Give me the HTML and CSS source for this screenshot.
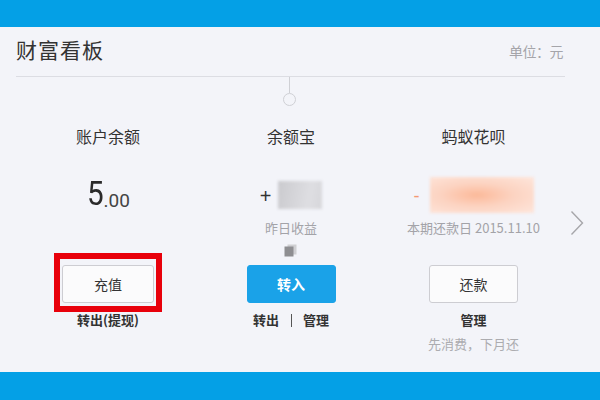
FILE: index.html
```html
<!DOCTYPE html>
<html lang="zh-CN">
<head>
<meta charset="utf-8">
<title>财富看板</title>
<link rel="stylesheet" href="styles.css">
</head>
<body>
<div class="page">
  <div class="bar"></div>
  <main class="board">
    <header class="board-head">
      <h1 class="board-title">财富看板</h1>
      <span class="unit">单位：元</span>
    </header>
    <div class="connector"><span class="stem"></span><span class="knob"></span></div>
    <section class="cols">
      <div class="col">
        <div class="col-title">账户余额</div>
        <div class="value"><span class="int">5</span><span class="dec">.00</span></div>
        <div class="meta"></div>
        <div class="btn-wrap">
          <button class="btn btn-plain">充值</button>
          <span class="mark"></span>
        </div>
        <div class="links">转出(提现)</div>
      </div>
      <div class="col">
        <div class="col-title">余额宝</div>
        <div class="value"><span class="sign">+</span><span class="blur blur-gray"></span></div>
        <div class="meta">
          <div class="sub">昨日收益</div>
          <svg class="doc" width="13" height="13" viewBox="0 0 13 13"><rect x="3.5" y="0.5" width="9" height="10" fill="#cfcfd2"/><rect x="0.5" y="2.5" width="9" height="10" fill="#8e8e91"/></svg>
        </div>
        <div class="btn-wrap">
          <button class="btn btn-blue">转入</button>
        </div>
        <div class="links"><span>转出</span><span class="pipe"></span><span>管理</span></div>
      </div>
      <div class="col">
        <div class="col-title">蚂蚁花呗</div>
        <div class="value"><span class="sign sign-minus">-</span><span class="blur blur-peach"></span></div>
        <div class="meta">
          <div class="sub">本期还款日 2015.11.10</div>
        </div>
        <div class="btn-wrap">
          <button class="btn btn-plain btn-narrow">还款</button>
        </div>
        <div class="links">管理</div>
        <div class="hint">先消费，下月还</div>
      </div>
      <svg class="next" width="14" height="26" viewBox="0 0 14 26"><polyline points="1.5,1.5 12.5,13 1.5,24.5" fill="none" stroke="#a6a6aa" stroke-width="1.4"/></svg>
    </section>
  </main>
  <div class="bar bar-bottom"></div>
</div>
</body>
</html>
```

FILE: styles.css
```css
* { box-sizing: border-box; }
html, body { margin: 0; padding: 0; }
body {
  font-family: "Noto Sans CJK SC", "Noto Sans", sans-serif;
  background: #f3f4f9;
  color: #333;
}
.page {
  height: 400px;
  display: flex;
  flex-direction: column;
}
.bar {
  height: 27px;
  background: #04a0e6;
  flex: none;
}
.bar-bottom { height: 28px; }
.board {
  flex: 1;
  padding: 0 35px 0 16px;
}
.board-head {
  height: 50px;
  display: flex;
  align-items: flex-start;
  justify-content: space-between;
  padding-top: 8px;
  border-bottom: 1px solid #dcdde3;
}
.board-title {
  margin: 0;
  font-size: 21px;
  font-weight: 400;
  color: #333;
  letter-spacing: 1px;
  line-height: 28px;
}
.unit {
  font-size: 14px;
  line-height: 20px;
  color: #a5a5aa;
  margin-top: 6px;
  margin-right: 2px;
  letter-spacing: -0.5px;
}
.connector {
  height: 30px;
  display: flex;
  flex-direction: column;
  align-items: center;
  margin-left: -2px;
}
.stem {
  width: 1px;
  height: 16px;
  background: #cfd0d5;
}
.knob {
  width: 13px;
  height: 13px;
  border: 1.5px solid #cfd0d5;
  border-radius: 50%;
}
.cols {
  position: relative;
  display: grid;
  grid-template-columns: 184px 182px 183px;
}
.col {
  display: flex;
  flex-direction: column;
  align-items: center;
}
.col-title {
  margin-top: 19px;
  height: 20px;
  line-height: 20px;
  font-size: 16px;
  color: #333;
}
.value {
  margin-top: 31px;
  height: 36px;
  display: flex;
  align-items: center;
  justify-content: center;
}
.int {
  font-family: "Roboto", "Liberation Sans", sans-serif;
  font-size: 33px;
  line-height: 36px;
  color: #2a2a2a;
  transform: scaleX(0.9);
  margin-top: -2px;
}
.dec {
  font-family: "Roboto", "Liberation Sans", sans-serif;
  font-size: 19px;
  color: #444;
  margin-top: 11px;
  margin-left: -1px;
}
.sign {
  font-family: "Liberation Sans", sans-serif;
  font-size: 20px;
  color: #333;
  margin-right: 7px;
  margin-top: 2px;
}
.sign-minus {
  color: #f39a72;
  margin-right: 10px;
  font-size: 18px;
}
.blur {
  display: block;
  filter: blur(1.5px);
}
.blur-gray {
  width: 44px;
  height: 28px;
  background: linear-gradient(100deg, #cacace, #dedee2 70%, #d6d6da);
}
.blur-peach {
  width: 104px;
  height: 36px;
  background: radial-gradient(ellipse at 45% 50%, #fbb999 0%, #fcd3c1 45%, #fde6dc 100%);
}
.meta {
  height: 52px;
  display: flex;
  flex-direction: column;
  align-items: center;
}
.sub {
  margin-top: 7px;
  font-size: 13px;
  line-height: 16px;
  color: #a3a3a8;
}
.doc {
  margin-top: 8px;
}
.btn-wrap {
  position: relative;
  height: 38px;
}
.btn {
  font-family: "Noto Sans CJK SC", sans-serif;
  height: 38px;
  width: 89px;
  font-size: 14px;
  border-radius: 3px;
  padding: 0;
}
.btn-plain {
  width: 92px;
  background: #fbfbfc;
  border: 1px solid #cdcdd2;
  color: #333;
}
.btn-narrow { width: 89px; }
.btn-blue {
  background: #1aa2e8;
  border: 1px solid #1aa2e8;
  color: #fff;
  font-weight: 700;
}
.mark {
  position: absolute;
  left: -8px;
  right: -8px;
  top: -12px;
  bottom: -9px;
  border: 6px solid #e8000b;
}
.links {
  margin-top: 9px;
  font-size: 13px;
  line-height: 16px;
  color: #333;
  font-weight: 600;
  display: flex;
  align-items: center;
}
.pipe {
  width: 1px;
  height: 13px;
  margin: 0 11px 0 12px;
  background: #555;
}
.hint {
  margin-top: 8px;
  font-size: 13px;
  line-height: 16px;
  color: #acacb0;
}
.next {
  position: absolute;
  right: -19px;
  top: 103px;
}
```
